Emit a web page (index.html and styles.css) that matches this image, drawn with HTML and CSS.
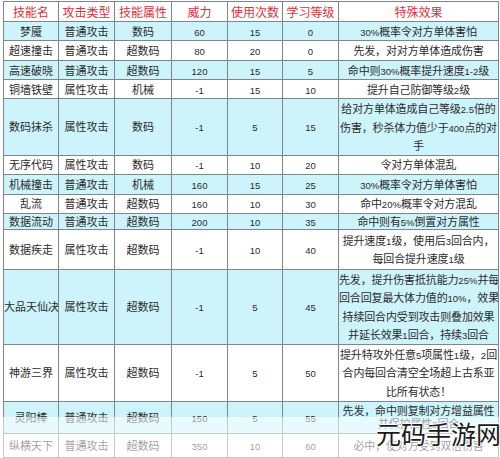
FILE: index.html
```html
<!DOCTYPE html>
<html lang="zh">
<head>
<meta charset="utf-8">
<link rel="stylesheet" href="styles.css">
</head>
<body>
<div class="page">
<table class="skills">
<colgroup>
<col class="c1"><col class="c2"><col class="c3"><col class="c4"><col class="c5"><col class="c6"><col class="c7">
</colgroup>
<tr class="head h20"><th>技能名</th><th>攻击类型</th><th>技能属性</th><th>威力</th><th>使用次数</th><th>学习等级</th><th>特殊效果</th></tr>
<tr class="cy h19"><td>梦魇</td><td>普通攻击</td><td>数码</td><td><span class="n">60</span></td><td><span class="n">15</span></td><td><span class="n">0</span></td><td class="fx"><span class="n">30%</span>概率令对方单体害怕</td></tr>
<tr class="wh h20"><td>超速撞击</td><td>普通攻击</td><td>超数码</td><td><span class="n">80</span></td><td><span class="n">20</span></td><td><span class="n">0</span></td><td class="fx">先发，对对方单体造成伤害</td></tr>
<tr class="cy h19"><td>高速破晓</td><td>普通攻击</td><td>超数码</td><td><span class="n">120</span></td><td><span class="n">15</span></td><td><span class="n">5</span></td><td class="fx">命中则<span class="n">30%</span>概率提升速度<span class="n">1-2</span>级</td></tr>
<tr class="wh h19"><td>铜墙铁壁</td><td>属性攻击</td><td>机械</td><td><span class="n">-1</span></td><td><span class="n">15</span></td><td><span class="n">10</span></td><td class="fx">提升自己防御等级<span class="n">2</span>级</td></tr>
<tr class="cy h56"><td>数码抹杀</td><td>属性攻击</td><td>数码</td><td><span class="n">-1</span></td><td><span class="n">5</span></td><td><span class="n">15</span></td><td class="fx ml">给对方单体造成自己等级<span class="n">2.5</span>倍的<br>伤害，秒杀体力值少于<span class="n">400</span>点的对<br>手</td></tr>
<tr class="wh h19"><td>无序代码</td><td>属性攻击</td><td>数码</td><td><span class="n">-1</span></td><td><span class="n">10</span></td><td><span class="n">20</span></td><td class="fx">令对方单体混乱</td></tr>
<tr class="cy h20"><td>机械撞击</td><td>普通攻击</td><td>机械</td><td><span class="n">160</span></td><td><span class="n">15</span></td><td><span class="n">25</span></td><td class="fx"><span class="n">30%</span>概率令对方单体害怕</td></tr>
<tr class="wh h19"><td>乱流</td><td>普通攻击</td><td>超数码</td><td><span class="n">160</span></td><td><span class="n">10</span></td><td><span class="n">30</span></td><td class="fx">命中<span class="n">20%</span>概率令对方混乱</td></tr>
<tr class="cy h16"><td>数据流动</td><td>普通攻击</td><td>超数码</td><td><span class="n">200</span></td><td><span class="n">10</span></td><td><span class="n">35</span></td><td class="fx">命中则有<span class="n">5%</span>倒置对方属性</td></tr>
<tr class="wh h40"><td>数据疾走</td><td>属性攻击</td><td>超数码</td><td><span class="n">-1</span></td><td><span class="n">10</span></td><td><span class="n">40</span></td><td class="fx ml">提升速度<span class="n">1</span>级，使用后<span class="n">3</span>回合内，<br>每回合提升速度<span class="n">1</span>级</td></tr>
<tr class="cy h74"><td>大品天仙决</td><td>属性攻击</td><td>超数码</td><td><span class="n">-1</span></td><td><span class="n">5</span></td><td><span class="n">45</span></td><td class="fx ml">先发，提升伤害抵抗能力<span class="n">25%</span>并每<br>回合回复最大体力值的<span class="n">10%</span>，效果<br>持续回合内受到攻击则叠加效果<br>并延长效果<span class="n">1</span>回合，持续<span class="n">3</span>回合</td></tr>
<tr class="wh h57"><td>神游三界</td><td>属性攻击</td><td>超数码</td><td><span class="n">-1</span></td><td><span class="n">5</span></td><td><span class="n">50</span></td><td class="fx ml">提升特攻外任意<span class="n">5</span>项属性<span class="n">1</span>级，<span class="n">2</span>回<br>合内每回合清空全场超上古系亚<br>比所有状态！</td></tr>
<tr class="cy h32"><td>灵阳棒</td><td>普通攻击</td><td>超数码</td><td><span class="n">150</span></td><td><span class="n">5</span></td><td><span class="n">55</span></td><td class="fx short">先发，命中则复制对方增益属性<br>并保护属性<span class="n">2</span>回合</td></tr>
<tr class="wh h24"><td>纵横天下</td><td>普通攻击</td><td>超数码</td><td><span class="n">350</span></td><td><span class="n">10</span></td><td><span class="n">60</span></td><td class="fx">必中，使对方受到双倍伤害</td></tr>
</table>
<div class="fade"></div>
<div class="mark">元码手游网</div>
</div>
</body>
</html>
```
FILE: styles.css
```css
html, body {
  margin: 0;
  padding: 0;
  background: #ffffff;
}
.page {
  position: relative;
  width: 500px;
  height: 458px;
  overflow: hidden;
  padding: 1px 0 0 3px;
  box-sizing: border-box;
}
.skills {
  border-collapse: collapse;
  table-layout: fixed;
  width: 495px;
  font-family: "Noto Sans CJK SC", "Noto Sans", sans-serif;
  font-size: 11px;
  color: #2b2b2b;
}
.c1 { width: 55px; }
.c2 { width: 56px; }
.c3 { width: 57px; }
.c4 { width: 56px; }
.c5 { width: 55px; }
.c6 { width: 56px; }
.c7 { width: 160px; }
.skills th, .skills td {
  border: 1px solid #7d878b;
  padding: 0;
  text-align: center;
  vertical-align: middle;
  white-space: nowrap;
  line-height: 15px;
  overflow: hidden;
}
.skills th {
  font-weight: normal;
  color: #d8323c;
  font-size: 12px;
}
.skills td.fx { letter-spacing: -0.15px; }
.skills td.ml { line-height: 18.5px; }
.skills td.short { line-height: 13px; }
.head { background: #ffffff; }
.cy { background: #cdf3fb; }
.wh { background: #ffffff; }
.n {
  font-family: "Liberation Sans", sans-serif;
  font-size: 9.5px;
  line-height: 8px;
  letter-spacing: 0;
}
.h16 { height: 16px; }
.h19 { height: 19px; }
.h20 { height: 20px; }
.h24 { height: 24px; }
.h32 { height: 32px; }
.h40 { height: 40px; }
.h56 { height: 56px; }
.h57 { height: 57px; }
.h74 { height: 74px; }
.fade {
  position: absolute;
  left: 0;
  top: 417px;
  width: 500px;
  height: 41px;
  background: rgba(255, 255, 255, 0.55);
}
.mark {
  position: absolute;
  left: 376px;
  top: 421px;
  font-family: "Noto Sans CJK SC", sans-serif;
  font-size: 25px;
  line-height: 25px;
  color: #1c1c1c;
  white-space: nowrap;
  text-shadow: 1px 0 0 #fff, -1px 0 0 #fff, 0 1px 0 #fff, 0 -1px 0 #fff;
}
```
